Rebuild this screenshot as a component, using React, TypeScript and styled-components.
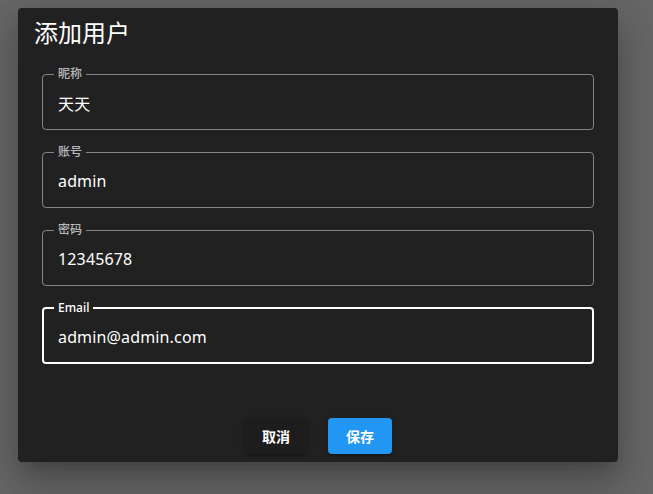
import styled, { createGlobalStyle } from "styled-components";

const GlobalStyle = createGlobalStyle`
    html, body {
        margin: 0;
        background: #676767;
        font-family: "Noto Sans", "Noto Sans CJK SC", sans-serif;
    }
`

const Backdrop = styled.div`
    width: 653px;
    height: 494px;
    box-sizing: border-box;
    padding: 8px 0 0 18px;
    overflow: hidden;
`

const Dialog = styled.div`
    width: 600px;
    box-sizing: border-box;
    padding: 9px 24px 8px;
    background: #212121;
    border-radius: 4px;
    color: #fff;
    box-shadow: 0px 11px 15px -7px rgba(0,0,0,0.2), 0px 24px 38px 3px rgba(0,0,0,0.14), 0px 9px 46px 8px rgba(0,0,0,0.12);
`

const Title = styled.h2`
    margin: 0 0 19px -8px;
    font-size: 24px;
    line-height: 32px;
    font-weight: 400;
`

const Fields = styled.div`
    display: flex;
    flex-direction: column;
    gap: 16px;
`

const Field = styled.fieldset<{ $focused?: boolean }>`
    margin: 0;
    padding: 0 ${p => p.$focused ? 14 : 15}px ${p => p.$focused ? 5 : 6}px;
    border: ${p => p.$focused ? 2 : 1}px solid ${p => p.$focused ? "#fff" : "rgba(255,255,255,0.45)"};
    border-radius: 4px;
    min-width: 0;
`

const Legend = styled.legend<{ $focused?: boolean }>`
    padding: 0 4px;
    margin-left: -4px;
    font-size: 12px;
    line-height: 12px;
    font-weight: 500;
    color: ${p => p.$focused ? "#fff" : "rgba(255,255,255,0.7)"};
`

const Input = styled.input`
    display: block;
    width: 100%;
    height: 40px;
    margin-top: 3px;
    padding: 0;
    border: none;
    outline: none;
    background: transparent;
    color: #fff;
    font-family: inherit;
    font-size: 16px;
    letter-spacing: 0.15px;
`

const Actions = styled.div`
    display: flex;
    justify-content: center;
    gap: 20px;
    margin-top: 54px;
`

const Button = styled.button<{ $primary?: boolean }>`
    width: 64px;
    height: 36px;
    border: none;
    border-radius: 4px;
    font-family: inherit;
    font-size: 14px;
    font-weight: 700;
    color: #fff;
    background: ${p => p.$primary ? "#2196f3" : "#1d1d1d"};
    box-shadow: 0px 3px 1px -2px rgba(0,0,0,0.2), 0px 2px 2px 0px rgba(0,0,0,0.14), 0px 1px 5px 0px rgba(0,0,0,0.12);
`

const fields = [
    { label: "昵称", value: "天天" },
    { label: "账号", value: "admin" },
    { label: "密码", value: "12345678" },
    { label: "Email", value: "admin@admin.com", focused: true },
]

const App = () => {
    return (
        <>
            <GlobalStyle />
            <Backdrop>
                <Dialog>
                    <Title>添加用户</Title>
                    <Fields>
                        {fields.map(f => (
                            <Field key={f.label} $focused={f.focused}>
                                <Legend $focused={f.focused}>{f.label}</Legend>
                                <Input defaultValue={f.value} />
                            </Field>
                        ))}
                    </Fields>
                    <Actions>
                        <Button>取消</Button>
                        <Button $primary>保存</Button>
                    </Actions>
                </Dialog>
            </Backdrop>
        </>
    )
}

export default App
